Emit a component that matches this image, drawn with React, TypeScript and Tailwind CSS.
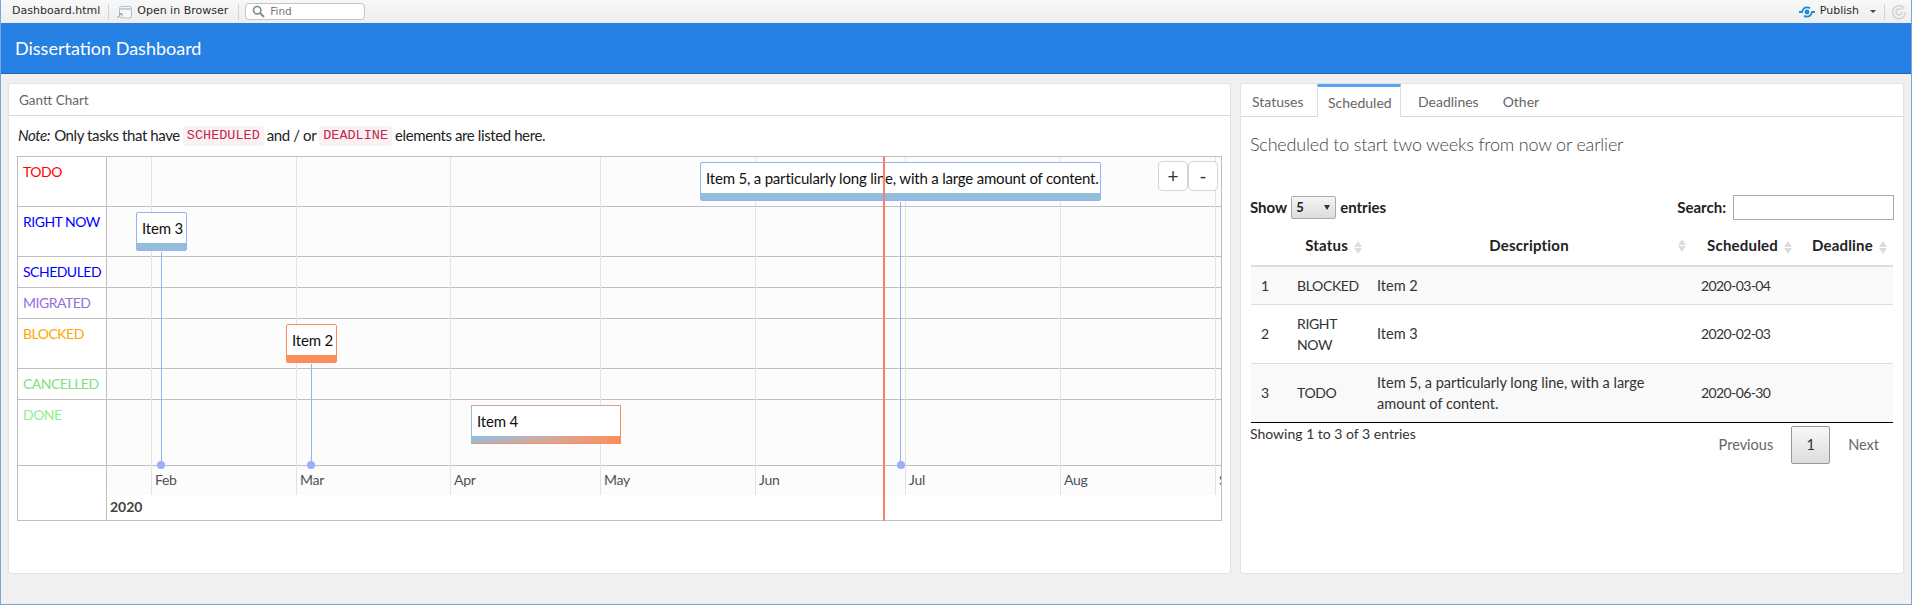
const sans = "font-['Lato','Noto_Sans',sans-serif]";

const lanes = [
  { name: "TODO", color: "text-[#ff0000]", height: "h-[50px]" },
  { name: "RIGHT NOW", color: "text-[#0000ff]", height: "h-[50px]" },
  { name: "SCHEDULED", color: "text-[#0000ff]", height: "h-[31px]" },
  { name: "MIGRATED", color: "text-[#9370db]", height: "h-[31px]" },
  { name: "BLOCKED", color: "text-[#ffa500]", height: "h-[50px]" },
  { name: "CANCELLED", color: "text-[#7fe07f]", height: "h-[31px]" },
  { name: "DONE", color: "text-[#90ee90]", height: "h-[66px]" },
];

const gridLines = ["left-[44px]", "left-[189px]", "left-[343px]", "left-[493px]", "left-[648px]", "left-[798px]", "left-[953px]", "left-[1108px]"];

const months = [
  { name: "Feb", pos: "left-[48px]" },
  { name: "Mar", pos: "left-[193px]" },
  { name: "Apr", pos: "left-[347px]" },
  { name: "May", pos: "left-[497px]" },
  { name: "Jun", pos: "left-[652px]" },
  { name: "Jul", pos: "left-[802px]" },
  { name: "Aug", pos: "left-[957px]" },
  { name: "Sep", pos: "left-[1112px]" },
];

const Toolbar = () => (
  <div className="flex h-[23px] items-center bg-gradient-to-b from-[#f8f8f8] to-[#eeeeee] font-['DejaVu_Sans',sans-serif] text-[11px] text-[#2b2b2b]">
    <span className="ml-[11px]">Dashboard.html</span>
    <div className="ml-[8px] h-4 w-px bg-[#d2d2d2]" />
    <svg className="ml-[7px]" width="16" height="14" viewBox="0 0 16 14">
      <rect x="3.500" y="1.500" width="12" height="11.500" rx="2" fill="#f4f8fb" stroke="#b4bfc8" />
      <path d="M4 4h11" stroke="#c3cfd9" strokeWidth="2" />
      <path d="M1 13l4-4M3 8.500h3v3" fill="none" stroke="#9aa5ae" />
    </svg>
    <span className="ml-[5px]">Open in Browser</span>
    <div className="ml-[10px] h-4 w-px bg-[#d2d2d2]" />
    <div className="ml-[6px] flex h-[17px] w-[120px] items-center rounded-[4px] border border-[#c4c4c4] bg-white pl-[6px] text-[#777]">
      <svg width="13" height="13" viewBox="0 0 13 13" fill="none">
        <circle cx="5.200" cy="5.200" r="3.700" stroke="#8a8a8a" strokeWidth="1.600" />
        <path d="M8 8l4 4" stroke="#8a8a8a" strokeWidth="2" />
      </svg>
      <span className="ml-[5px] text-[10.5px]">Find</span>
    </div>
    <div className="ml-auto flex items-center">
      <svg width="16" height="12" viewBox="0 0 16 12" fill="none">
        <circle cx="8" cy="6" r="2.400" fill="#1a8fd6" />
        <path d="M0 6h3C3.800 3 5.500 1.300 8 1.300c1.200 0 2.200.3 3 1" stroke="#1a8fd6" strokeWidth="1.800" />
        <path d="M16 6h-3c-.8 3-2.500 4.700-5 4.700-1.200 0-2.200-.3-3-1" stroke="#1a8fd6" strokeWidth="1.800" />
      </svg>
      <span className="ml-[5px]">Publish</span>
      <div className="ml-[11px] h-0 w-0 border-x-[3px] border-t-[3px] border-x-transparent border-t-[#444]" />
      <div className="ml-[8px] h-4 w-px bg-[#d2d2d2]" />
      <svg className="ml-[6px] mr-[4px]" width="16" height="16" viewBox="0 0 16 16" fill="none">
        <path d="M12.500 3.500A6.500 6.500 0 1 0 14.500 8" stroke="#c8cdd0" strokeWidth="1.300" />
        <path d="M11 8A3 3 0 1 1 9.500 5.400" stroke="#c8cdd0" strokeWidth="1.300" />
        <path d="M9 1l5 2-3 3.500z" fill="#d5d9dc" />
      </svg>
    </div>
  </div>
);

const ItemBox = ({ pos, label, bar }: { pos: string; label: string; bar: string }) => (
  <div className={`absolute z-10 flex h-[39px] flex-col rounded-[2px] border bg-white text-[15px] tracking-[-0.2px] text-[#111] ${pos}`}>
    <div className="flex flex-1 items-center whitespace-nowrap px-[5px] leading-none">{label}</div>
    <div className={`h-[7px] ${bar}`} />
  </div>
);

const Gantt = () => (
  <div className="ml-[8px] mt-px h-[365px] w-[1205px] border border-[#bfbfbf]">
    <div className="flex h-full">
      <div className="w-[89px] shrink-0 border-r border-[#bfbfbf]">
        {lanes.map((lane) => (
          <div key={lane.name} className={`whitespace-nowrap border-b border-[#bfbfbf] pl-[5px] pt-[5px] text-[14px] leading-[20px] tracking-[-0.5px] ${lane.height} ${lane.color}`}>
            {lane.name}
          </div>
        ))}
      </div>
      <div className="relative flex-1 overflow-hidden">
        <div className="bg-[#fcfcfc]">
          {lanes.map((lane) => (
            <div key={lane.name} className={`border-b border-[#bfbfbf] ${lane.height}`} />
          ))}
          <div className="relative h-[29px] text-[14px] leading-[28px] tracking-[-0.3px] text-[#4d5258]">
            {months.map((m) => (
              <span key={m.name} className={`absolute top-0 ${m.pos}`}>{m.name}</span>
            ))}
          </div>
        </div>
        <div className="pl-[3px] pt-[1px] text-[14px] font-bold leading-[22px] text-[#444]">2020</div>
        {gridLines.map((g) => (
          <div key={g} className={`absolute top-0 h-[338px] w-px bg-[#e3e3e3] ${g}`} />
        ))}
      </div>
    </div>
  </div>
);

const overlayLines = [
  "left-[161px] top-[252px] h-[213px]",
  "left-[311px] top-[364px] h-[101px]",
  "left-[900px] top-[202px] h-[263px]",
];

const markers = ["left-[157px]", "left-[307px]", "left-[897px]"];

const GanttOverlay = () => (
  <div className={`absolute -left-px top-0 ${sans}`}>
    {overlayLines.map((l) => (
      <div key={l} className={`absolute w-px bg-[#97b0f8] ${l}`} />
    ))}
    {markers.map((m) => (
      <div key={m} className={`absolute top-[461px] z-10 size-[8px] rounded-full bg-[#97b0f8] ${m}`} />
    ))}
    <ItemBox pos="left-[136px] top-[212px] w-[51px] border-[#97b0f8]" label="Item 3" bar="bg-[#92bedb]" />
    <ItemBox pos="left-[286px] top-[324px] w-[51px] border-[#fc8d59]" label="Item 2" bar="bg-[#fc8d59]" />
    <ItemBox pos="left-[471px] top-[405px] w-[150px] !rounded-none border-[#fc8d59] border-l-[#92bedb] border-t-[#c8a894]" label="Item 4" bar="bg-gradient-to-r from-[#92bedb] to-[#fc8d59]" />
    <ItemBox pos="left-[700px] top-[162px] w-[401px] border-[#97b0f8]" label="Item 5, a particularly long line, with a large amount of content." bar="bg-[#92bedb]" />
    <div className="absolute left-[883px] top-[156px] z-20 h-[365px] w-[2px] bg-[#fb7e70]" />
    <div className="absolute left-[1158px] top-[161px] z-20 flex h-[30px] text-[19px] text-[#333]">
      <div className="flex w-[30px] items-center justify-center rounded-[5px] border border-[#d4d4d4] bg-white">+</div>
      <div className="flex w-[30px] items-center justify-center rounded-[5px] border border-[#d4d4d4] bg-white">-</div>
    </div>
  </div>
);

const SortArrows = () => (
  <span className="ml-[6px] inline-flex flex-col gap-[1px] align-middle">
    <span className="h-0 w-0 border-x-[4px] border-b-[6px] border-x-transparent border-b-[#dcdcdc]" />
    <span className="h-0 w-0 border-x-[4px] border-t-[6px] border-x-transparent border-t-[#dcdcdc]" />
  </span>
);

const rows = [
  { n: 1, status: "BLOCKED", desc: "Item 2", date: "2020-03-04", h: "h-[38px]", bg: "bg-[#f9f9f9]" },
  { n: 2, status: "RIGHT NOW", desc: "Item 3", date: "2020-02-03", h: "h-[59px]", bg: "bg-white" },
  { n: 3, status: "TODO", desc: "Item 5, a particularly long line, with a large amount of content.", date: "2020-06-30", h: "h-[59px]", bg: "bg-[#f9f9f9]" },
];

const RightPanel = () => (
  <div className="flex w-[664px] flex-col rounded-[3px] border border-[#e2e2e2] bg-white text-[14px] text-[#333]">
    <div className="flex h-[33px] shrink-0 border-b border-[#d8d8d8] pt-[2px] text-[#666]">
      <div className="flex w-[76px] items-center pl-[11px]">Statuses</div>
      <div className="-mb-px -mt-[2px] flex w-[84px] items-center border-x border-t-[3px] border-x-[#ddd] border-t-[#5aa5f0] bg-white pl-[10px] text-[#666]">Scheduled</div>
      <div className="flex items-center pl-[17px]">Deadlines</div>
      <div className="ml-[24px] flex items-center">Other</div>
    </div>
    <div className="flex-1 px-[9px]">
      <h4 className="mt-[15px] text-[18px] font-light leading-[25px] tracking-[-0.2px] text-[#444]">Scheduled to start two weeks from now or earlier</h4>
      <div className="mt-[38px] flex h-[25px] items-center justify-between text-[15px] text-[#222]">
        <div className="flex items-center font-bold">
          Show
          <div className="mx-[4px] flex h-[23px] w-[45px] items-center justify-between rounded-[2px] border border-[#aaa] bg-gradient-to-b from-[#f5f5f5] to-[#dcdcdc] pl-1 pr-[5px] text-[13px]">
            <span>5</span>
            <span className="h-0 w-0 border-x-[3px] border-t-[5px] border-x-transparent border-t-[#333]" />
          </div>
          entries
        </div>
        <div className="flex items-center font-bold">
          Search:
          <div className="ml-[7px] h-[25px] w-[161px] border border-[#aaa] bg-white" />
        </div>
      </div>
      <table className="ml-px mt-[8px] w-[642px] table-fixed border-collapse">
        <colgroup>
          <col className="w-[36px]" />
          <col className="w-[80px]" />
          <col className="w-[324px]" />
          <col className="w-[115px]" />
          <col className="w-[87px]" />
        </colgroup>
        <thead>
          <tr className="h-[38px] border-b-2 border-[#ddd] text-[15px] tracking-[0.2px] text-[#222]">
            <th />
            <th className="whitespace-nowrap pb-[2px] pr-[5px] text-right font-bold">Status<SortArrows /></th>
            <th className="relative pb-[2px] text-center font-bold">Description<span className="absolute right-[5px] top-[4px]"><SortArrows /></span></th>
            <th className="whitespace-nowrap pb-[2px] pr-[14px] text-right font-bold">Scheduled<SortArrows /></th>
            <th className="whitespace-nowrap pb-[2px] pr-[6px] text-right font-bold">Deadline<SortArrows /></th>
          </tr>
        </thead>
        <tbody>
          {rows.map((r, i) => (
            <tr key={r.n} className={`${r.h} ${r.bg} ${i === 2 ? "border-b border-black" : "border-b border-[#ddd]"}`}>
              <td className="pl-[10px]">{r.n}</td>
              <td className="pl-[10px] pr-[8px] leading-[21px] tracking-[-0.35px]">{r.status}</td>
              <td className="pl-[10px] pr-[30px] text-[14.5px] leading-[21px]">{r.desc}</td>
              <td className="pl-[10px] tracking-[-0.6px]">{r.date}</td>
              <td />
            </tr>
          ))}
        </tbody>
      </table>
      <div className="flex items-start justify-between">
        <div className="mt-[1px] leading-[20px]">Showing 1 to 3 of 3 entries</div>
        <div className="mr-[15px] mt-[3px] flex items-center text-[14.5px] text-[#666]">
          <span>Previous</span>
          <div className="ml-[18px] flex h-[38px] w-[39px] items-center justify-center rounded-[2px] border border-[#979797] bg-gradient-to-b from-[#f8f8f8] to-[#dcdcdc] text-[#333]">1</div>
          <span className="ml-[18px]">Next</span>
        </div>
      </div>
    </div>
  </div>
);

const codeClass = "mx-[3px] rounded-[2px] bg-[#f9f2f4] px-[4px] font-['Liberation_Mono',monospace] text-[13.5px] leading-[20px] tracking-normal text-[#c7254e]";

export default function App() {
  return (
    <div className={`relative h-[605px] w-[1912px] overflow-hidden border-x border-b border-[#7fa2e0] bg-[#f0f0f0] ${sans}`}>
      <Toolbar />
      <div className="flex h-[51px] items-center border-b border-[#1967be] bg-[#2780e3] pl-[14px] text-[18px] text-white">
        Dissertation Dashboard
      </div>
      <div className="mt-[9px] flex h-[491px] gap-[9px] pl-[7px]">
        <div className="h-full w-[1223px] rounded-[3px] border border-[#e2e2e2] bg-white text-[14px] text-[#333]">
          <div className="flex h-[32px] items-center border-b border-[#d8d8d8] pl-[10px] pt-[2px] text-[13.5px] text-[#666]">Gantt Chart</div>
          <div className="flex h-[39px] items-center pl-[9px] text-[15px] tracking-[-0.4px] text-[#222]">
            <em className="mr-1">Note:</em> Only tasks that have
            <code className={codeClass}>SCHEDULED</code>
            and / or
            <code className={codeClass}>DEADLINE</code>
            elements are listed here.
          </div>
          <Gantt />
        </div>
        <RightPanel />
      </div>
      <GanttOverlay />
    </div>
  );
}
